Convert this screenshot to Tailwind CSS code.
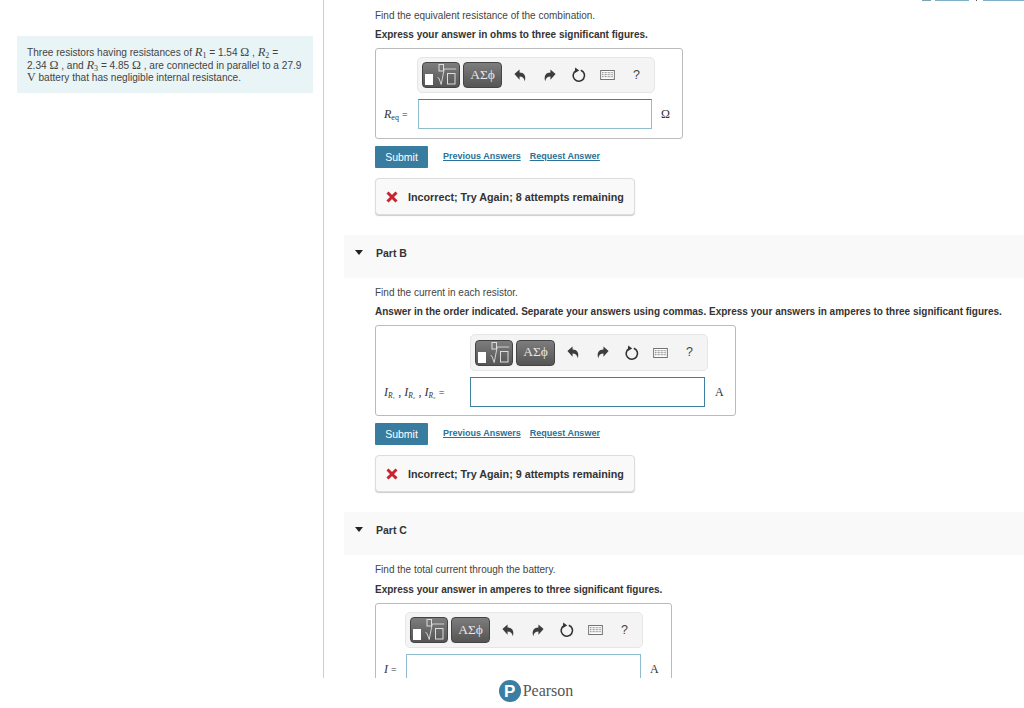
<!DOCTYPE html>
<html lang="en">
  <head>
    <meta charset="UTF-8" />
    <title>Resistors in parallel</title>
    <script src="https://cdn.jsdelivr.net/npm/@tailwindcss/browser@4"></script>
  </head>
  <body class="bg-white font-['Liberation_Sans',sans-serif] text-[#333] overflow-hidden">
    <!-- shared toolbar icons -->
    <svg class="hidden">
      <symbol id="i-undo" viewBox="0 0 16 16"><path d="M1.5 6.5 7 1.5v3.2c4.6.1 7.4 3.3 5.6 9.3-.9-3.6-2.7-4.9-5.6-5v3.4z" fill="#3d3d3d" /></symbol>
      <symbol id="i-redo" viewBox="0 0 16 16"><path d="M14.5 6.5 9 1.5v3.2C4.4 4.8 1.6 8 3.4 14c.9-3.6 2.7-4.9 5.6-5v3.4z" fill="#3d3d3d" /></symbol>
      <symbol id="i-reset" viewBox="0 0 16 16"><path d="M9.8 3.2a5.7 5.7 0 1 1-4.6.3" fill="none" stroke="#333" stroke-width="1.6" /><path d="M4.2 .4 8.2 3.4 3.8 6z" fill="#333" /></symbol>
      <symbol id="i-keys" viewBox="0 0 16 11"><rect x=".5" y=".5" width="15" height="10" fill="#fff" stroke="#666" /><path d="M2 3h12M2 5.2h12M2 7.4h12" stroke="#777" stroke-width="1.1" stroke-dasharray="1 .6" /></symbol>
      <symbol id="i-templates" viewBox="0 0 34 22">
        <rect x="1" y="10" width="8" height="11" fill="#fff" />
        <rect x="15" y=".5" width="4.5" height="6.5" fill="none" stroke="#ddd" />
        <path d="M13.5 13.5l1.5.8 2.2 6.2 3-15.5h12" fill="none" stroke="#ddd" stroke-width=".9" />
        <rect x="23.5" y="9.5" width="7.5" height="10.5" fill="none" stroke="#ddd" />
      </symbol>
    </svg>

    <div class="flex h-[678px] overflow-hidden">
      <!-- left column -->
      <div class="w-[324px] shrink-0 border-r border-[#c9ced6] pl-[17px] pt-[36px]">
        <div class="w-[296px] h-[57px] bg-[#e9f4f6] pl-[10px] pt-[10px] text-[10.1px] leading-[12.5px] text-[#444] whitespace-nowrap">
          <div class="h-[12.5px]">Three resistors having resistances of <i class="font-['Liberation_Serif',serif] text-[12.5px] leading-none">R</i><sub class="font-['Liberation_Serif',serif] text-[8px] bottom-[-2px]">1</sub> = 1.54 <span class="font-['Liberation_Serif',serif] text-[12px] leading-none">Ω</span> , <i class="font-['Liberation_Serif',serif] text-[12.5px] leading-none">R</i><sub class="font-['Liberation_Serif',serif] text-[8px] bottom-[-2px]">2</sub> =</div>
          <div class="h-[12.5px]">2.34 <span class="font-['Liberation_Serif',serif] text-[12px] leading-none">Ω</span> , and <i class="font-['Liberation_Serif',serif] text-[12.5px] leading-none">R</i><sub class="font-['Liberation_Serif',serif] text-[8px] bottom-[-2px]">3</sub> = 4.85 <span class="font-['Liberation_Serif',serif] text-[12px] leading-none">Ω</span> , are connected in parallel to a 27.9</div>
          <div class="h-[12.5px]"><span class="font-['Liberation_Serif',serif] text-[12px] leading-none">V</span> battery that has negligible internal resistance.</div>
        </div>
      </div>

      <!-- right column -->
      <div class="flex-1 min-w-0 pl-[20px]">
        <div class="h-[9px] flex justify-end gap-[4px] items-start">
          <div class="w-[9px] h-px bg-[#7fa3b8]"></div>
          <div class="w-[34px] h-px bg-[#7fb0c9] mr-[3px]"></div>
          <div class="w-px h-px bg-[#555] mr-[2px]"></div>
          <div class="w-[41px] h-px bg-[#7fb0c9]"></div>
        </div>

        <!-- Part A, tail end -->
        <div class="pl-[31px]">
          <p class="text-[10px] leading-[14px] text-[#444]">Find the equivalent resistance of the combination.</p>
          <p class="mt-[5px] text-[10px] leading-[14px] font-bold">Express your answer in ohms to three significant figures.</p>
          <div class="mt-[6px] w-[308px] h-[91px] border border-[#bbb] rounded-[3px]">
            <div class="ml-[41px] mt-[8px] w-[238px] h-[36px] bg-[#f4f4f4] border border-[#e6e6e6] rounded-[5px] flex items-center pl-[4px]">
              <div class="w-[38px] h-[26px] rounded-[4px] border border-[#444] bg-gradient-to-b from-[#7d7d7d] to-[#555] flex items-center justify-center"><svg class="w-[34px] h-[22px]"><use href="#i-templates" /></svg></div>
              <div class="ml-[3px] w-[39px] h-[26px] rounded-[4px] border border-[#444] bg-gradient-to-b from-[#7d7d7d] to-[#555] flex items-center justify-center font-['Liberation_Serif',serif] text-[13.5px] text-[#e8e8e8]">ΑΣϕ</div>
              <div class="ml-[4px] flex items-center">
                <div class="w-[29px] flex justify-center"><svg class="w-[15px] h-[15px]"><use href="#i-undo" /></svg></div>
                <div class="w-[29px] flex justify-center"><svg class="w-[15px] h-[15px]"><use href="#i-redo" /></svg></div>
                <div class="w-[29px] flex justify-center"><svg class="w-[16px] h-[16px]"><use href="#i-reset" /></svg></div>
                <div class="w-[29px] flex justify-center items-center"><svg class="w-[15px] h-[10px]"><use href="#i-keys" /></svg></div>
                <div class="w-[29px] text-center text-[12.5px] leading-[13px] text-[#444]">?</div>
              </div>
            </div>
            <div class="mt-[6px] flex items-center">
              <div class="w-[42px] pl-[8px] font-['Liberation_Serif',serif] text-[12px] whitespace-nowrap"><i>R</i><sub class="text-[8px] bottom-[-2px]">eq</sub> <span class="text-[10px]">=</span></div>
              <div class="w-[234px] h-[30px] border border-[#8fbccf] border-t-[#3f7f9f]"></div>
              <div class="ml-[9px] font-['Liberation_Serif',serif] text-[12px]">Ω</div>
            </div>
          </div>
          <div class="mt-[7px] h-[22px] flex items-center">
            <div class="w-[53px] h-[22px] bg-[#387ca0] rounded-[1px] text-white text-[10.5px] leading-[22px] text-center">Submit</div>
            <a class="ml-[15px] text-[9px] font-bold text-[#2a7299] underline">Previous Answers</a>
            <a class="ml-[9px] text-[9px] font-bold text-[#2a7299] underline">Request Answer</a>
          </div>
          <div class="mt-[10px] w-[260px] h-[37px] bg-[#f9f9f9] border border-[#ddd] rounded-[4px] shadow-[0_1px_1px_#ccc] flex items-center pl-[10px]">
            <svg class="w-[12px] h-[12px]" viewBox="0 0 12 12"><path d="M1.5 1.5l9 9M10.5 1.5l-9 9" stroke="#c8242f" stroke-width="3" /></svg>
            <span class="ml-[10px] pt-px text-[10.75px] font-bold whitespace-nowrap">Incorrect; Try Again; 8 attempts remaining</span>
          </div>
        </div>

        <!-- Part B -->
        <div class="mt-[20px] h-[43px] bg-[#f9f9f9] flex items-start pt-[11px] pl-[10px]">
          <svg class="w-[10px] h-[14px]" viewBox="0 0 10 14"><path d="M1 4h8L5 9z" fill="#222" /></svg>
          <span class="ml-[12px] text-[10.5px] leading-[14px] font-bold">Part B</span>
        </div>
        <div class="pl-[31px]">
          <p class="mt-[8px] text-[10px] leading-[14px] text-[#444]">Find the current in each resistor.</p>
          <p class="mt-[5px] text-[10px] leading-[14px] font-bold whitespace-nowrap">Answer in the order indicated. Separate your answers using commas. Express your answers in amperes to three significant figures.</p>
          <div class="mt-[6px] w-[361px] h-[91px] border border-[#bbb] rounded-[3px]">
            <div class="ml-[94px] mt-[8px] w-[238px] h-[37px] bg-[#f4f4f4] border border-[#e6e6e6] rounded-[5px] flex items-center pl-[4px]">
              <div class="w-[38px] h-[26px] rounded-[4px] border border-[#444] bg-gradient-to-b from-[#7d7d7d] to-[#555] flex items-center justify-center"><svg class="w-[34px] h-[22px]"><use href="#i-templates" /></svg></div>
              <div class="ml-[3px] w-[39px] h-[26px] rounded-[4px] border border-[#444] bg-gradient-to-b from-[#7d7d7d] to-[#555] flex items-center justify-center font-['Liberation_Serif',serif] text-[13.5px] text-[#e8e8e8]">ΑΣϕ</div>
              <div class="ml-[4px] flex items-center">
                <div class="w-[29px] flex justify-center"><svg class="w-[15px] h-[15px]"><use href="#i-undo" /></svg></div>
                <div class="w-[29px] flex justify-center"><svg class="w-[15px] h-[15px]"><use href="#i-redo" /></svg></div>
                <div class="w-[29px] flex justify-center"><svg class="w-[16px] h-[16px]"><use href="#i-reset" /></svg></div>
                <div class="w-[29px] flex justify-center items-center"><svg class="w-[15px] h-[10px]"><use href="#i-keys" /></svg></div>
                <div class="w-[29px] text-center text-[12.5px] leading-[13px] text-[#444]">?</div>
              </div>
            </div>
            <div class="mt-[6px] flex items-center">
              <div class="w-[94px] pl-[8px] font-['Liberation_Serif',serif] text-[12px] whitespace-nowrap"><i>I</i><sub class="text-[7.5px] bottom-[-2px]"><i>R</i>₁</sub> , <i>I</i><sub class="text-[7.5px] bottom-[-2px]"><i>R</i>₂</sub> , <i>I</i><sub class="text-[7.5px] bottom-[-2px]"><i>R</i>₃</sub> <span class="text-[10px]">=</span></div>
              <div class="w-[235px] h-[30px] border border-[#3f7f9f]"></div>
              <div class="ml-[10px] font-['Liberation_Serif',serif] text-[12px]">A</div>
            </div>
          </div>
          <div class="mt-[7px] h-[22px] flex items-center">
            <div class="w-[53px] h-[22px] bg-[#387ca0] rounded-[1px] text-white text-[10.5px] leading-[22px] text-center">Submit</div>
            <a class="ml-[15px] text-[9px] font-bold text-[#2a7299] underline">Previous Answers</a>
            <a class="ml-[9px] text-[9px] font-bold text-[#2a7299] underline">Request Answer</a>
          </div>
          <div class="mt-[10px] w-[260px] h-[37px] bg-[#f9f9f9] border border-[#ddd] rounded-[4px] shadow-[0_1px_1px_#ccc] flex items-center pl-[10px]">
            <svg class="w-[12px] h-[12px]" viewBox="0 0 12 12"><path d="M1.5 1.5l9 9M10.5 1.5l-9 9" stroke="#c8242f" stroke-width="3" /></svg>
            <span class="ml-[10px] pt-px text-[10.75px] font-bold whitespace-nowrap">Incorrect; Try Again; 9 attempts remaining</span>
          </div>
        </div>

        <!-- Part C -->
        <div class="mt-[20px] h-[43px] bg-[#f9f9f9] flex items-start pt-[11px] pl-[10px]">
          <svg class="w-[10px] h-[14px]" viewBox="0 0 10 14"><path d="M1 4h8L5 9z" fill="#222" /></svg>
          <span class="ml-[12px] text-[10.5px] leading-[14px] font-bold">Part C</span>
        </div>
        <div class="pl-[31px]">
          <p class="mt-[8px] text-[10px] leading-[14px] text-[#444]">Find the total current through the battery.</p>
          <p class="mt-[6px] text-[10px] leading-[14px] font-bold">Express your answer in amperes to three significant figures.</p>
          <div class="mt-[6px] w-[297px] h-[91px] border border-[#bbb] rounded-[3px]">
            <div class="ml-[29px] mt-[8px] w-[238px] h-[36px] bg-[#f4f4f4] border border-[#e6e6e6] rounded-[5px] flex items-center pl-[4px]">
              <div class="w-[38px] h-[26px] rounded-[4px] border border-[#444] bg-gradient-to-b from-[#7d7d7d] to-[#555] flex items-center justify-center"><svg class="w-[34px] h-[22px]"><use href="#i-templates" /></svg></div>
              <div class="ml-[3px] w-[39px] h-[26px] rounded-[4px] border border-[#444] bg-gradient-to-b from-[#7d7d7d] to-[#555] flex items-center justify-center font-['Liberation_Serif',serif] text-[13.5px] text-[#e8e8e8]">ΑΣϕ</div>
              <div class="ml-[4px] flex items-center">
                <div class="w-[29px] flex justify-center"><svg class="w-[15px] h-[15px]"><use href="#i-undo" /></svg></div>
                <div class="w-[29px] flex justify-center"><svg class="w-[15px] h-[15px]"><use href="#i-redo" /></svg></div>
                <div class="w-[29px] flex justify-center"><svg class="w-[16px] h-[16px]"><use href="#i-reset" /></svg></div>
                <div class="w-[29px] flex justify-center items-center"><svg class="w-[15px] h-[10px]"><use href="#i-keys" /></svg></div>
                <div class="w-[29px] text-center text-[12.5px] leading-[13px] text-[#444]">?</div>
              </div>
            </div>
            <div class="mt-[6px] flex items-center">
              <div class="w-[30px] pl-[8px] font-['Liberation_Serif',serif] text-[12px] whitespace-nowrap"><i>I</i> <span class="text-[10px]">=</span></div>
              <div class="w-[235px] h-[30px] border border-[#8fbccf]"></div>
              <div class="ml-[9px] font-['Liberation_Serif',serif] text-[12px]">A</div>
            </div>
          </div>
        </div>
      </div>
    </div>

    <!-- footer -->
    <div class="h-[26px] flex items-center justify-center pl-[48px]">
      <div class="w-[22px] h-[22px] rounded-full bg-[#3a7ea3] flex items-center justify-center text-white text-[17px] font-bold leading-none">P</div>
      <span class="ml-[2px] font-['Liberation_Serif',serif] text-[16px] text-[#555]">Pearson</span>
    </div>
  </body>
</html>
